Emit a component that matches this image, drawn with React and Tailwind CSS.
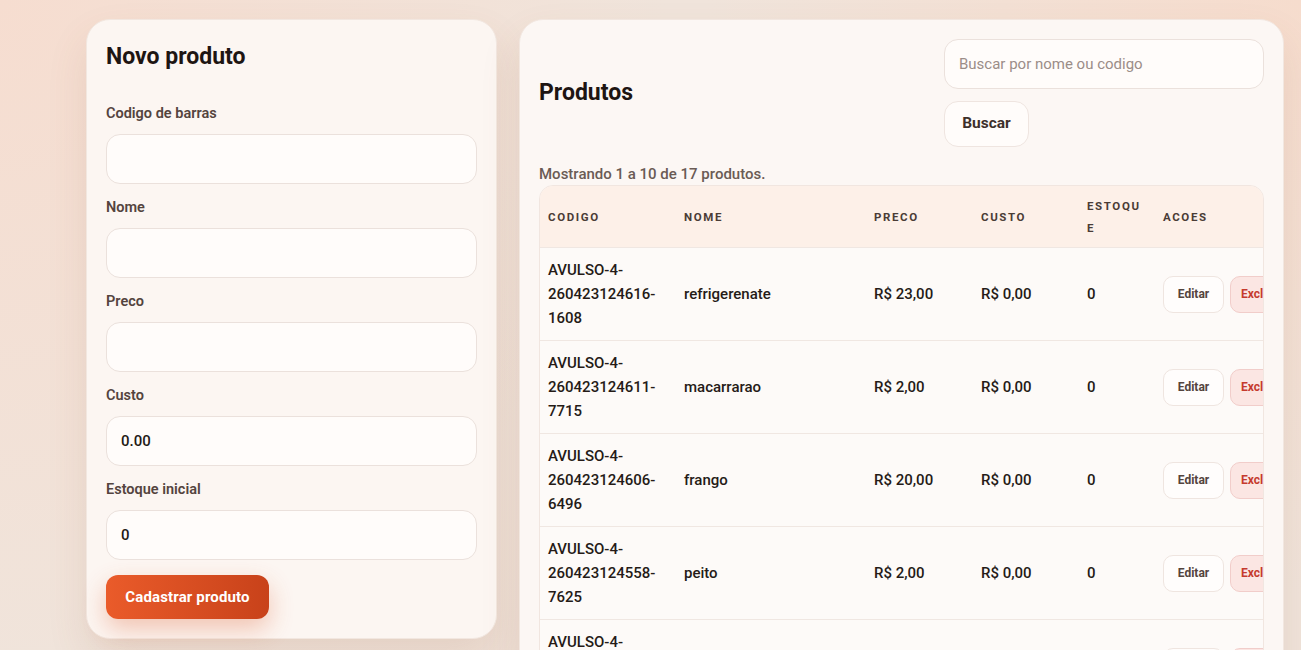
import React from "react";

const rows = [
  { code: ["AVULSO-4-", "260423124616-", "1608"], nome: "refrigerenate", preco: "R$ 23,00", custo: "R$ 0,00", est: "0" },
  { code: ["AVULSO-4-", "260423124611-", "7715"], nome: "macarrarao", preco: "R$ 2,00", custo: "R$ 0,00", est: "0" },
  { code: ["AVULSO-4-", "260423124606-", "6496"], nome: "frango", preco: "R$ 20,00", custo: "R$ 0,00", est: "0" },
  { code: ["AVULSO-4-", "260423124558-", "7625"], nome: "peito", preco: "R$ 2,00", custo: "R$ 0,00", est: "0" },
  { code: ["AVULSO-4-", "260423124553-", "1180"], nome: "arroz", preco: "R$ 5,00", custo: "R$ 0,00", est: "0" },
];

function Field({ label, value }) {
  return (
    <div className="flex flex-col">
      <label className="text-[14.5px] leading-[20px] font-semibold text-[#54443e] mb-[10px]">{label}</label>
      <input
        readOnly
        value={value}
        className="h-[50px] w-full rounded-[14px] border border-[#ebe1dc] bg-[#fffcfa] px-[14px] text-[15px] font-medium text-[#231a16] outline-none"
      />
    </div>
  );
}

export default function App() {
  return (
    <div
      className="min-h-screen w-full overflow-hidden bg-[#f0e4db] bg-[radial-gradient(circle_at_0%_0%,#f6ddd0_0%,transparent_45%),radial-gradient(circle_at_100%_0%,#f6dccd_0%,transparent_40%),radial-gradient(circle_at_50%_100%,#efe0d6_0%,transparent_60%)]"
      style={{ fontFamily: "Roboto, 'Open Sans', sans-serif" }}
    >
      <div className="flex items-start gap-[22px] pl-[86px] pr-[17px] pt-[19px]">
        {/* Left card */}
        <div className="w-[411px] shrink-0 rounded-[24px] border border-[#f2e7e0] bg-[#fcf6f2] p-[19px] shadow-[0_20px_40px_rgba(150,90,60,0.12)]">
          <h2 className="text-[23px] leading-[36px] font-bold text-[#1e1512] mb-[29px]">Novo produto</h2>
          <div className="flex flex-col gap-[14px]">
            <Field label="Codigo de barras" value="" />
            <Field label="Nome" value="" />
            <Field label="Preco" value="" />
            <Field label="Custo" value="0.00" />
            <Field label="Estoque inicial" value="0" />
          </div>
          <button className="mt-[15px] h-[44px] w-[163px] rounded-[12px] bg-gradient-to-r from-[#ea5b2a] to-[#c8421a] text-[15px] font-bold tracking-[0.01em] text-white shadow-[0_10px_24px_rgba(220,80,30,0.3)]">
            Cadastrar produto
          </button>
        </div>

        {/* Right card */}
        <div className="flex-1 min-w-0 h-[700px] rounded-[24px] border border-[#f2e7e0] bg-[#fcf7f4] p-[19px] shadow-[0_20px_40px_rgba(150,90,60,0.12)]">
          <div className="flex items-center justify-between">
            <h2 className="text-[23px] leading-[34px] font-bold text-[#1e1512]">Produtos</h2>
            <div className="flex w-[320px] flex-col items-start gap-3">
              <input
                readOnly
                placeholder="Buscar por nome ou codigo"
                className="h-[50px] w-full rounded-[14px] border border-[#ebe1dc] bg-[#fffcfa] px-[14px] text-[15px] text-[#231a16] placeholder:text-[#9b8d88] outline-none"
              />
              <button className="h-[46px] w-[85px] rounded-[14px] border border-[#efe5e0] bg-[#fffcfa] text-[15.5px] font-bold text-[#3d302b]">
                Buscar
              </button>
            </div>
          </div>

          <p className="mt-[17px] mb-[1px] text-[15px] leading-[20px] font-medium text-[#6a5b55]">Mostrando 1 a 10 de 17 produtos.</p>

          <div className="overflow-hidden rounded-[14px] border border-[#f1e6e0] bg-[#fdfaf8]">
            <table className="w-[785px] table-fixed border-collapse text-left">
              <colgroup>
                <col className="w-[136px]" />
                <col className="w-[190px]" />
                <col className="w-[107px]" />
                <col className="w-[106px]" />
                <col className="w-[76px]" />
                <col className="w-[170px]" />
              </colgroup>
              <thead>
                <tr className="bg-[#fdf0e8] text-[11.5px] leading-[22px] font-bold uppercase tracking-[0.14em] text-[#4a3c36]">
                  <th className="px-2 py-[8.5px] align-middle">Codigo</th>
                  <th className="px-2 py-[8.5px] align-middle">Nome</th>
                  <th className="px-2 py-[8.5px] align-middle">Preco</th>
                  <th className="px-2 py-[8.5px] align-middle">Custo</th>
                  <th className="px-2 py-[8.5px] align-middle">Estoqu<br />e</th>
                  <th className="px-2 py-[8.5px] align-middle">Acoes</th>
                </tr>
              </thead>
              <tbody>
                {rows.map((r, i) => (
                  <tr key={i} className="border-t border-[#f0e7e2] text-[15px] leading-[24px] font-medium text-[#251b17]">
                    <td className="px-2 py-[10px] align-middle">
                      {r.code.map((c, j) => (
                        <div key={j}>{c}</div>
                      ))}
                    </td>
                    <td className="px-2 py-[10px] align-middle">{r.nome}</td>
                    <td className="px-2 py-[10px] align-middle">{r.preco}</td>
                    <td className="px-2 py-[10px] align-middle">{r.custo}</td>
                    <td className="px-2 py-[10px] align-middle">{r.est}</td>
                    <td className="px-2 py-[10px] align-middle">
                      <div className="flex gap-[6px]">
                        <button className="h-[37px] w-[61px] rounded-[10px] border border-[#efe5e0] bg-[#fffdfc] text-[12px] font-bold text-[#54443e]">
                          Editar
                        </button>
                        <button className="h-[37px] rounded-[10px] border border-[#f1cdca] bg-[#fbe6e3] px-[10px] text-[12px] font-bold text-[#c53a2e]">
                          Excluir
                        </button>
                      </div>
                    </td>
                  </tr>
                ))}
              </tbody>
            </table>
          </div>
        </div>
      </div>
    </div>
  );
}
